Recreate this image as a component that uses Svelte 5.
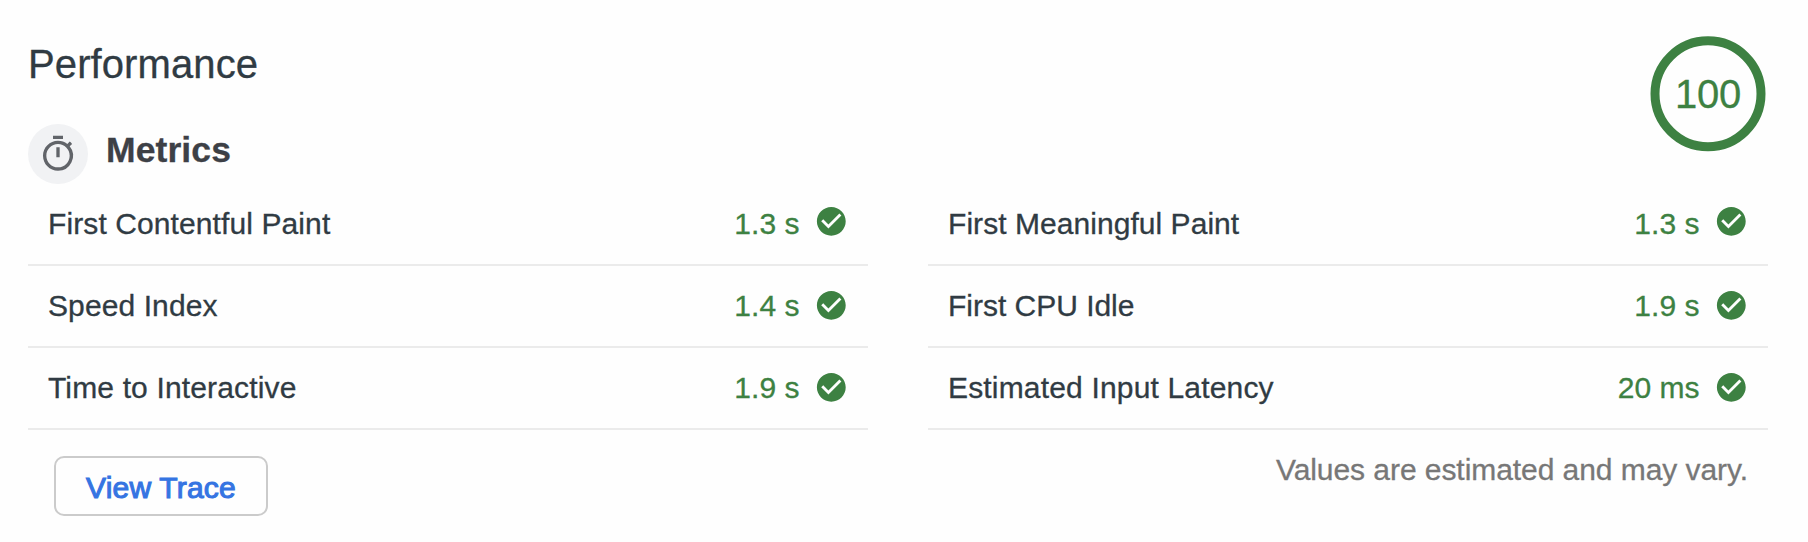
<script>
  const columns = [
    [
      { label: 'First Contentful Paint', value: '1.3 s', fit: 0.1 },
      { label: 'Speed Index', value: '1.4 s', fit: 0.1 },
      { label: 'Time to Interactive', value: '1.9 s', fit: 0.15 }
    ],
    [
      { label: 'First Meaningful Paint', value: '1.3 s', fit: 0.05 },
      { label: 'First CPU Idle', value: '1.9 s', fit: -0.02 },
      { label: 'Estimated Input Latency', value: '20 ms', fit: 0.17 }
    ]
  ];
</script>

<main>
  <header>
    <div class="heading">
      <h1>Performance</h1>
      <div class="group">
        <span class="badge">
          <svg width="40" height="40" viewBox="0 0 24 24" aria-hidden="true">
            <path fill="#616469" d="M15 1H9v2h6V1zm-4 13h2V8h-2v6zm8.03-6.61l1.42-1.42c-.43-.51-.9-.99-1.41-1.41l-1.42 1.42A8.962 8.962 0 0 0 12 4c-4.97 0-9 4.03-9 9s4.02 9 9 9a8.994 8.994 0 0 0 7.03-14.61zM12 20c-3.87 0-7-3.13-7-7s3.13-7 7-7 7 3.13 7 7-3.13 7-7 7z" />
          </svg>
        </span>
        <h2>Metrics</h2>
      </div>
    </div>
    <div class="gauge">
      <svg width="120" height="120" viewBox="0 0 120 120" aria-hidden="true">
        <circle cx="60" cy="59.8" r="53" fill="none" stroke="#3d8142" stroke-width="9" />
      </svg>
      <span>100</span>
    </div>
  </header>

  <section class="columns">
    {#each columns as rows}
      <div class="column">
        {#each rows as row}
          <div class="row">
            <span class="label" style="letter-spacing: {row.fit}px">{row.label}</span>
            <span class="value">{row.value}</span>
            <svg class="pass" width="34.6" height="34.6" viewBox="0 0 48 48" aria-hidden="true">
              <path fill="#3d8142" d="M24 4C12.95 4 4 12.95 4 24c0 11.04 8.95 20 20 20 11.04 0 20-8.96 20-20 0-11.05-8.96-20-20-20zm-4 30L10 24l2.83-2.83L20 28.34l15.17-15.17L38 16 20 34z" />
            </svg>
          </div>
        {/each}
      </div>
    {/each}
  </section>

  <footer>
    <button>View Trace</button>
    <p>Values are estimated and may vary.</p>
  </footer>
</main>

<style>
  :global(body) {
    background: #fefefe;
  }
  main {
    box-sizing: border-box;
    width: 1808px;
    height: 542px;
    padding: 0 40px 0 28px;
    font-family: "Liberation Sans", Arial, sans-serif;
    font-size: 30px;
    color: #303b43;
    -webkit-text-stroke: 0.3px currentColor;
    overflow: hidden;
  }
  header {
    display: flex;
    justify-content: space-between;
    height: 184px;
  }
  .heading {
    padding-top: 41px;
  }
  h1, h2, p {
    margin: 0;
  }
  h1 {
    font-size: 40px;
    font-weight: 400;
    line-height: 46px;
    letter-spacing: 0.1px;
  }
  .group {
    display: flex;
    gap: 18px;
    margin-top: 37px;
  }
  .badge {
    display: flex;
    justify-content: center;
    align-items: center;
    width: 60px;
    height: 60px;
    border-radius: 50%;
    background: #f1f2f4;
  }
  h2 {
    padding-top: 6px;
    font-size: 35.5px;
    font-weight: 700;
    line-height: 40px;
    letter-spacing: 0.1px;
    color: #3d4046;
  }
  .gauge {
    display: grid;
    place-items: center;
    width: 120px;
    height: 120px;
    margin-top: 34px;
    color: #3d8142;
  }
  .gauge > * {
    grid-area: 1 / 1;
  }
  .gauge span {
    font-size: 40px;
    line-height: 46px;
    letter-spacing: -0.2px;
  }
  .columns {
    display: grid;
    grid-template-columns: 840px 840px;
    gap: 60px;
  }
  .row {
    display: flex;
    align-items: center;
    height: 80px;
    padding: 0 19px 0 20px;
    border-bottom: 2px solid #ebebeb;
    line-height: 80px;
  }
  .label {
    flex: 1;
  }
  .value {
    color: #3d8142;
  }
  .pass {
    margin: 0 0 2px 15px;
  }
  .row:first-child .pass {
    margin-bottom: 5px;
  }
  footer {
    display: flex;
    justify-content: space-between;
    align-items: flex-start;
    padding: 26px 20px 0 26px;
  }
  button {
    box-sizing: border-box;
    width: 214px;
    height: 60px;
    padding: 4px 0 0;
    border: 2px solid #cbcbcb;
    border-radius: 10px;
    background: #fefefe;
    font: inherit;
    letter-spacing: 0.2px;
    color: #3574e2;
    -webkit-text-stroke: 1.1px #3574e2;
  }
  p {
    color: #777;
    line-height: 34px;
    margin-top: -3px;
    letter-spacing: -0.06px;
  }
</style>
